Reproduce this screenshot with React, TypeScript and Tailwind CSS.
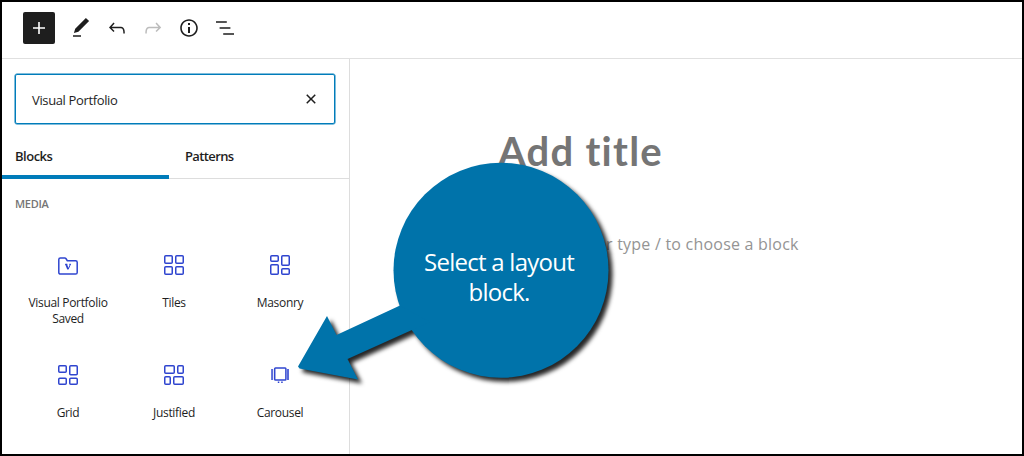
import React from 'react';

// --- ICONS ---
const toolbarIcons = [
  { name: 'Tools', color: 'text-[#1e1e1e]', d: 'M20.1 5.1L16.9 2 6.2 12.7l-1.3 4.4 4.5-1.3L20.1 5.1zM4 20.8h8v-1.5H4v1.5z' },
  { name: 'Undo', color: 'text-[#1e1e1e]', d: 'M18.3 11.7c-.6-.6-1.4-.9-2.3-.9H6.7l2.9-3.3-1.1-1-4.5 5L8.5 16l1-1-2.7-2.7H16c.5 0 .9.2 1.3.5 1 1 1 3.4 1 4.5v.3h1.5v-.2c0-1.5 0-4.3-1.5-5.7z' },
  { name: 'Redo', color: 'text-[#bcbcbc]', d: 'M15.6 6.5l-1.1 1 2.9 3.3H8c-.9 0-1.7.3-2.3.9-1.4 1.5-1.4 4.2-1.4 5.6v.2h1.5v-.3c0-1.1 0-3.5 1-4.5.3-.3.7-.5 1.3-.5h9.2L14.5 15l1.1 1.1 4.6-4.6-4.6-5z' },
  { name: 'Details', color: 'text-[#1e1e1e]', d: 'M12 3.2c-4.8 0-8.8 3.9-8.8 8.8 0 4.8 3.9 8.8 8.8 8.8 4.8 0 8.8-3.9 8.8-8.8 0-4.8-4-8.8-8.8-8.8zm0 16c-4 0-7.2-3.3-7.2-7.2C4.8 8 8 4.8 12 4.8s7.2 3.3 7.2 7.2c0 4-3.2 7.2-7.2 7.2zM11 17h2v-6h-2v6zm0-8h2V7h-2v2z' },
  { name: 'List View', color: 'text-[#1e1e1e]', d: 'M13.8 5.2H3v1.5h10.8V5.2zm-3.6 12v1.5H21v-1.5H10.2zm7.2-6H6.6v1.5h10.8v-1.5z' },
];

const Glyph = ({ d }: { d: string }) => (
  <svg viewBox="0 0 24 24" className="h-6 w-6 shrink-0" fill="currentColor"><path d={d} /></svg>
);

// x, y, width, height of every outlined cell on a 20px grid
type Cell = [number, number, number, number];

const CellIcon = ({ cells }: { cells: Cell[] }) => (
  <svg viewBox="0 0 20 20" className="h-5 w-5" fill="none" stroke="#2f45cf" strokeWidth="1.5">
    {cells.map(([x, y, w, h]) => (
      <rect key={`${x}-${y}`} x={x + 0.75} y={y + 0.75} width={w - 1.5} height={h - 1.5} rx="1" />
    ))}
  </svg>
);

const FolderIcon = () => (
  <svg viewBox="0 0 20 20" className="h-5 w-5" fill="none" stroke="#2f45cf" strokeWidth="1.5">
    <path d="M2.4 2.9h4.4c.5 0 .8.2 1.1.6L9.3 5.7h8.3c.9 0 1.6.7 1.6 1.6v10.2c0 .9-.7 1.6-1.6 1.6H2.4c-.9 0-1.6-.7-1.6-1.6v-13c0-.9.7-1.6 1.6-1.6z" />
    <path d="M7 9.3h2.4M11.2 9.3h1.8" strokeWidth="1" />
    <path d="M8 9.2l2.1 5" strokeWidth="1.8" />
    <path d="M10.1 14.5l2.3-5.2" strokeWidth="1" />
  </svg>
);

const CarouselIcon = () => (
  <svg viewBox="0 0 20 20" className="h-5 w-5" fill="none" stroke="#2f45cf">
    <rect x="4.7" y="2.9" width="11.2" height="12.2" rx="0.8" strokeWidth="1.5" />
    <path d="M2.1 4v11M18 4v11" strokeWidth="2" strokeOpacity="0.8" />
    <path d="M7.8 17.2h1.5M11.2 17.2h1.5" strokeWidth="1.4" />
  </svg>
);

const blocks = [
  { name: 'Visual Portfolio Saved', icon: <FolderIcon /> },
  { name: 'Tiles', icon: <CellIcon cells={[[0, 0, 9, 9], [11, 0, 9, 9], [0, 11, 9, 9], [11, 11, 9, 9]]} /> },
  { name: 'Masonry', icon: <CellIcon cells={[[0, 0, 9, 7], [11, 0, 9, 11], [0, 9, 9, 11], [11, 13, 9, 7]]} /> },
  { name: 'Grid', icon: <CellIcon cells={[[0, 0, 9, 8], [11, 0, 9, 10.5], [0, 12.5, 9, 7.5], [11, 12.5, 9, 7.5]]} /> },
  { name: 'Justified', icon: <CellIcon cells={[[0, 0, 11, 9], [13, 0, 7, 9], [0, 11, 7, 9], [9, 11, 11, 9]]} /> },
  { name: 'Carousel', icon: <CarouselIcon /> },
];

// --- EDITOR PARTS ---
const Toolbar = () => (
  <header className="flex h-[57px] shrink-0 items-start gap-3 border-b border-[#e0e0e0] pt-[10px] pl-[21px]">
    <button className="mr-0.5 flex h-8 w-8 items-center justify-center rounded-[2px] bg-[#1e1e1e] text-white">
      <Glyph d="M18 11.2h-5.2V6h-1.6v5.2H6v1.6h5.2V18h1.6v-5.2H18z" />
    </button>
    {toolbarIcons.map(icon => (
      <button key={icon.name} aria-label={icon.name} className={`flex h-8 items-center ${icon.color}`}>
        <Glyph d={icon.d} />
      </button>
    ))}
  </header>
);

const Inserter = () => (
  <aside className="w-[348px] shrink-0 border-r border-[#dddddd] text-[#1e1e1e]">
    <div className="mt-[15px] ml-[13px] flex h-[50px] w-[320px] items-center justify-between rounded-[2px] border border-[#007cba] pr-[11px] pl-4 shadow-[0_0_0_0.5px_#007cba]">
      <span className="pt-[3px] text-[13px] tracking-[-0.36px]">Visual Portfolio</span>
      <Glyph d="M12 13.06l3.712 3.713 1.061-1.06L13.061 12l3.712-3.712-1.06-1.06L12 10.938 8.288 7.227l-1.061 1.06L10.939 12l-3.712 3.712 1.06 1.061L12 13.061z" />
    </div>
    <div className="mt-[9px] flex h-[46px] border-b border-[#dddddd] text-[13px] font-semibold tracking-[-0.62px]">
      <div className="-mb-px w-[167px] border-b-4 border-[#007cba] pt-[14px] pl-[13px] tracking-[-0.5px]">Blocks</div>
      <div className="pt-[14px] pl-4">Patterns</div>
    </div>
    <h2 className="mt-4 ml-[13px] text-[11px] leading-[18px] font-semibold tracking-[-0.3px] text-[#757575]">MEDIA</h2>
    <div className="mt-[29px] ml-[13px] grid w-[318px] auto-rows-[110px] grid-cols-3">
      {blocks.map(block => (
        <div key={block.name} className="flex flex-col items-center pt-[13px]">
          {block.icon}
          <span className="mt-5 w-[88px] text-center text-[12px] leading-4 tracking-[-0.32px]">{block.name}</span>
        </div>
      ))}
    </div>
  </aside>
);

const Canvas = () => (
  <main className="flex-1 pt-[68px] pl-[148px]">
    <h1 className="font-['Lato',sans-serif] text-[40px] leading-[48px] font-bold tracking-[1.25px] text-[#757575]">Add title</h1>
    <p className="mt-[57px] text-[16px] leading-6 tracking-[0.22px] whitespace-nowrap text-[#949494]">Start writing or type / to choose a block</p>
  </main>
);

const Callout = () => (
  <div className="absolute top-[150px] left-[280px] h-[250px] w-[345px]">
    <svg viewBox="280 150 345 250" className="h-full w-full overflow-visible" fill="#0073aa">
      <g className="drop-shadow-[4px_4px_2px_rgba(0,0,0,0.85)]">
        <circle cx="501" cy="270.3" r="107.5" />
        <path d="M298 366.5L327 316L336.5 335L400 305.5L430 322L413 329.5L347.5 359L358 379.5L299.5 368.5z" />
      </g>
    </svg>
    <p className="absolute top-[97px] left-[119px] w-[200px] text-center text-[24px] leading-[30px] tracking-[-0.75px] text-white">
      Select a layout<br />block.
    </p>
  </div>
);

export default function App() {
  return (
    <div className="relative flex h-[456px] w-[1024px] flex-col overflow-hidden border-2 border-black bg-white font-['Open_Sans',sans-serif]">
      <Toolbar />
      <div className="flex min-h-0 flex-1">
        <Inserter />
        <Canvas />
      </div>
      <div className="absolute -top-0.5 -left-0.5"><Callout /></div>
    </div>
  );
}
